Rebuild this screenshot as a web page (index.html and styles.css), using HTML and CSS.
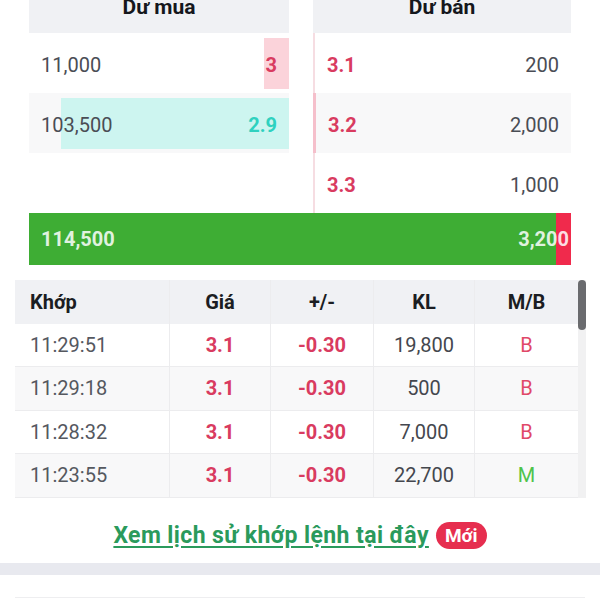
FILE: index.html
```html
<!DOCTYPE html>
<html lang="vi">
<head>
  <meta charset="UTF-8">
  <meta name="viewport" content="width=device-width, initial-scale=1.0">
  <title>Khớp lệnh</title>
  <link rel="stylesheet" href="styles.css">
</head>
<body>
  <div class="book">
    <div class="side">
      <div class="side-head">Dư mua</div>
      <div class="level">
        <span class="bar bar-ask" style="width: 25px"></span>
        <span class="vol">11,000</span>
        <span class="price up">3</span>
      </div>
      <div class="level alt">
        <span class="bar bar-bid" style="width: 228px"></span>
        <span class="vol">103,500</span>
        <span class="price ref">2.9</span>
      </div>
      <div class="level"></div>
    </div>
    <div class="side">
      <div class="side-head">Dư bán</div>
      <div class="level sell">
        <span class="price up">3.1</span>
        <span class="vol">200</span>
      </div>
      <div class="level sell alt strong">
        <span class="price up">3.2</span>
        <span class="vol">2,000</span>
      </div>
      <div class="level sell">
        <span class="price up">3.3</span>
        <span class="vol">1,000</span>
      </div>
    </div>
    <div class="total">
      <span class="total-sell" style="width: 15px"></span>
      <span class="total-num">114,500</span>
      <span class="total-num">3,200</span>
    </div>
  </div>

  <div class="trades">
    <div class="grid">
      <div class="cell head left">Khớp</div>
      <div class="cell head">Giá</div>
      <div class="cell head">+/-</div>
      <div class="cell head">KL</div>
      <div class="cell head">M/B</div>

      <div class="cell left time">11:29:51</div>
      <div class="cell up b">3.1</div>
      <div class="cell up b">-0.30</div>
      <div class="cell num">19,800</div>
      <div class="cell sell-side">B</div>

      <div class="cell left time alt">11:29:18</div>
      <div class="cell up b alt">3.1</div>
      <div class="cell up b alt">-0.30</div>
      <div class="cell num alt">500</div>
      <div class="cell sell-side alt">B</div>

      <div class="cell left time">11:28:32</div>
      <div class="cell up b">3.1</div>
      <div class="cell up b">-0.30</div>
      <div class="cell num">7,000</div>
      <div class="cell sell-side">B</div>

      <div class="cell left time alt">11:23:55</div>
      <div class="cell up b alt">3.1</div>
      <div class="cell up b alt">-0.30</div>
      <div class="cell num alt">22,700</div>
      <div class="cell buy-side alt">M</div>
    </div>
    <div class="scroll"><div class="thumb"></div></div>
  </div>

  <div class="history">
    <a href="#" class="history-link">Xem lịch sử khớp lệnh tại đây</a>
    <span class="badge">Mới</span>
  </div>

  <div class="band"></div>
  <div class="foot"></div>
</body>
</html>
```

FILE: styles.css
```css
* {
  padding: 0;
  margin: 0;
  box-sizing: border-box;
}
html,body {
  width: 100%;
  height: 100%;
  overflow: hidden;
}
body {
  background: #fff;
  font-family: Roboto, "Noto Sans", sans-serif;
  color: #4a4d55;
}

/* so lenh */
.book {
  display: grid;
  grid-template-columns: 260px 258px;
  column-gap: 24px;
  padding: 0 29px;
  margin-top: -20px;
}
.side-head {
  height: 53px;
  background: #f0f1f4;
  text-align: center;
  font-size: 21px;
  font-weight: 700;
  color: #15171c;
  line-height: 26px;
  padding-top: 14px;
}
.level {
  position: relative;
  height: 60px;
  display: flex;
  align-items: center;
  justify-content: space-between;
  padding: 3px 12px 0;
  font-size: 20px;
}
.level.alt {
  background: #f8f8f9;
}
.level > span {
  position: relative;
}
.level .bar {
  position: absolute;
  right: 0;
  top: 5px;
  bottom: 4px;
}
.bar-ask {
  background: #fbd3da;
}
.bar-bid {
  background: #cdf5f0;
}
.sell {
  border-left: 2px solid #f6dde2;
}
.sell.strong {
  border-left: 3px solid #f5bfcb;
}
.price {
  font-weight: 700;
}
.up {
  color: #d93b60;
}
.ref {
  color: #2fd1bf;
}
.total {
  grid-column: 1 / 3;
  position: relative;
  height: 52px;
  background: #3ead34;
  display: flex;
  align-items: center;
  justify-content: space-between;
  padding: 0 2px 0 12px;
  font-size: 20px;
  font-weight: 700;
}
.total-sell {
  position: absolute;
  right: 0;
  top: 0;
  bottom: 0;
  background: #f02a4c;
}
.total-num {
  position: relative;
  color: rgba(255,255,255,0.85);
}

/* khop lenh */
.trades {
  display: flex;
  margin: 15px 14px 0 15px;
}
.grid {
  flex: 1;
  display: grid;
  grid-template-columns: 155px 101px 103px 101px 1fr;
  grid-auto-rows: 43.5px;
}
.cell.head {
  height: 44px;
}
.cell {
  display: flex;
  align-items: center;
  justify-content: center;
  font-size: 20px;
  border-right: 1px solid #ececee;
  border-bottom: 1px solid #ececee;
}
.cell:nth-child(5n) {
  border-right: none;
}
.cell.left {
  justify-content: flex-start;
  padding-left: 15px;
}
.cell.head {
  background: #f0f1f4;
  font-weight: 700;
  color: #1b1d22;
  border-bottom: none;
}
.cell.alt {
  background: #f8f8f9;
}
.time {
  color: #55585f;
}
.b {
  font-weight: 700;
}
.num {
  color: #44474e;
}
.sell-side {
  color: #e04868;
}
.buy-side {
  color: #4fc34a;
}
.scroll {
  width: 8px;
  background: #f1f1f2;
}
.thumb {
  height: 50px;
  background: #6a6b6e;
  border-radius: 4px;
}

.history {
  height: 65px;
  display: flex;
  align-items: center;
  justify-content: center;
  gap: 7px;
  padding-top: 10px;
}
.history-link {
  color: #2a9a5c;
  font-size: 23px;
  font-weight: 700;
  letter-spacing: 0.4px;
  text-decoration: underline;
  text-underline-offset: 3px;
}
.badge {
  background: #e62e4f;
  color: #fff;
  font-size: 19px;
  font-weight: 700;
  line-height: 27px;
  padding: 0 9px;
  border-radius: 14px;
}
.band {
  height: 12px;
  background: #e8e9ef;
}
.foot {
  margin: 22px 15px 0;
  border-top: 1px solid #eeeef0;
}
```
